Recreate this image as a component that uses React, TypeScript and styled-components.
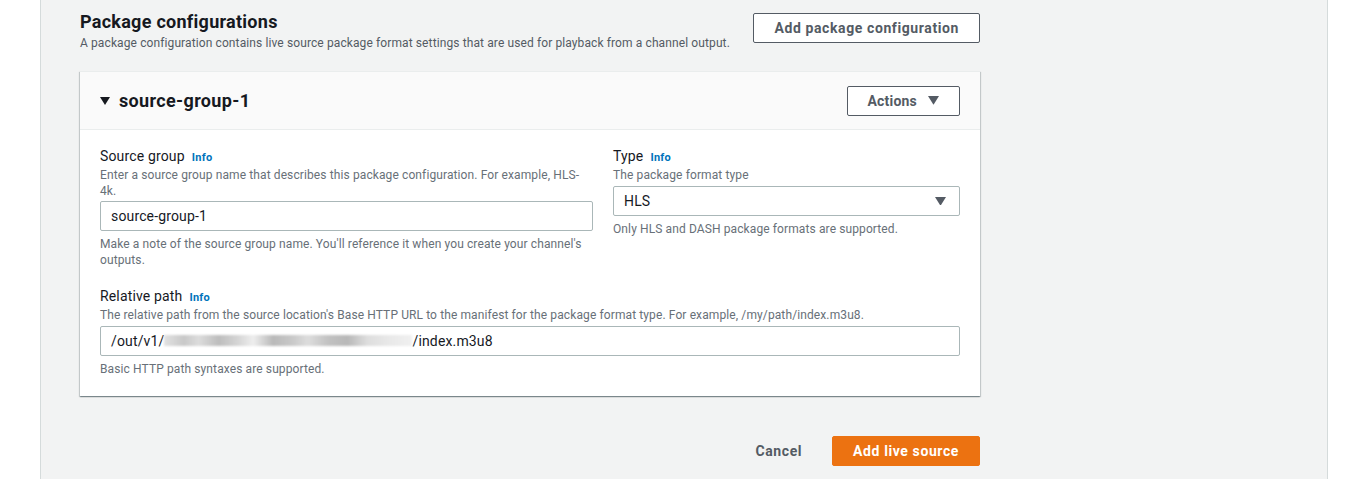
import React from "react";
import styled, { createGlobalStyle } from "styled-components";

const Global = createGlobalStyle`
  html, body { margin: 0; padding: 0; background: #ffffff; }
  body { font-family: Roboto, "Liberation Sans", Arial, sans-serif; color: #16191f; }
  * { box-sizing: border-box; }
`;

const Page = styled.div`
  display: flex;
  height: 479px;
  background: #ffffff;
`;

const Main = styled.main`
  margin-left: 40px;
  width: 1288px;
  background: #f2f3f3;
  border-left: 1px solid #d5dbdb;
  border-right: 1px solid #d5dbdb;
  padding: 10px 0 0 39px;
`;

const Content = styled.div`
  width: 900px;
  display: flex;
  flex-direction: column;
`;

const SectionHeader = styled.div`
  display: flex;
  justify-content: space-between;
  align-items: flex-start;
`;

const HeadingBlock = styled.div`
  display: flex;
  flex-direction: column;
`;

const Heading = styled.h2`
  margin: 0;
  font-size: 18px;
  line-height: 24px;
  font-weight: 700;
  letter-spacing: 0.27px;
  color: #16191f;
`;

const SectionDesc = styled.p`
  margin: 1px 0 0;
  font-size: 12px;
  line-height: 16px;
  letter-spacing: 0.11px;
  color: #545b64;
`;

const Button = styled.button<{ $primary?: boolean }>`
  height: 30px;
  padding: 0 20px;
  border-radius: 2px;
  font-family: inherit;
  font-size: 14px;
  font-weight: 700;
  letter-spacing: 0.6px;
  display: inline-flex;
  align-items: center;
  gap: 11px;
  cursor: pointer;
  background: ${(p) => (p.$primary ? "#ec7211" : "#ffffff")};
  color: ${(p) => (p.$primary ? "#ffffff" : "#545b64")};
  border: 1px solid ${(p) => (p.$primary ? "#ec7211" : "#545b64")};
`;

const TopButton = styled(Button)`
  margin-top: 3px;
`;

const ActionsButton = styled(Button)`
  letter-spacing: 0.2px;
`;

const LinkButton = styled.button`
  background: none;
  border: none;
  font-family: inherit;
  font-size: 14px;
  font-weight: 700;
  letter-spacing: 0.6px;
  color: #545b64;
  padding: 0 20px;
  height: 30px;
  cursor: pointer;
`;

const Panel = styled.section`
  margin-top: 20px;
  background: #ffffff;
  border-top: 1px solid #eaeded;
  box-shadow: 0 1px 1px 0 rgba(0, 28, 36, 0.3), 1px 1px 1px 0 rgba(0, 28, 36, 0.15),
    -1px 1px 1px 0 rgba(0, 28, 36, 0.15);
`;

const PanelHeader = styled.div`
  height: 58px;
  background: #fafafa;
  border-bottom: 1px solid #eaeded;
  display: flex;
  align-items: center;
  justify-content: space-between;
  padding: 0 20px;
`;

const PanelTitle = styled.h3`
  margin: 0;
  display: flex;
  align-items: center;
  gap: 9px;
  font-size: 18px;
  font-weight: 700;
  letter-spacing: 0.35px;
  color: #16191f;
`;

const PanelBody = styled.div`
  padding: 17px 20px 19px;
  display: flex;
  flex-direction: column;
  gap: 19px;
`;

const Row = styled.div`
  display: grid;
  grid-template-columns: 493px 347px;
  column-gap: 20px;
`;

const Field = styled.div`
  display: flex;
  flex-direction: column;
`;

const Label = styled.label`
  font-size: 14px;
  line-height: 18px;
  letter-spacing: 0.15px;
  color: #16191f;
  display: flex;
  align-items: baseline;
  gap: 7px;
`;

const Info = styled.a`
  font-size: 11px;
  font-weight: 700;
  letter-spacing: 0.3px;
  color: #0073bb;
  text-decoration: none;
`;

const Desc = styled.div`
  font-size: 12px;
  line-height: 16px;
  letter-spacing: 0.11px;
  color: #687078;
`;

const Constraint = styled(Desc)`
  margin-top: 5px;
`;

const InputBox = styled.div<{ $gap?: number }>`
  margin-top: ${(p) => p.$gap ?? 4}px;
  height: 30px;
  border: 1px solid #aab7b8;
  border-radius: 2px;
  background: #ffffff;
  display: flex;
  align-items: center;
  justify-content: space-between;
  padding: 0 13px 0 10px;
  font-size: 14px;
  letter-spacing: 0.15px;
  color: #16191f;
`;

const Redacted = styled.span`
  display: inline-block;
  width: 248px;
  height: 11px;
  margin-top: 2px;
  background: linear-gradient(
    90deg,
    #e2e2e2 0%, #c8c8c8 8%, #dcdcdc 14%, #bdbdbd 22%, #d6d6d6 30%,
    #eeeeee 36%, #b9b9b9 44%, #c9c9c9 52%, #dddddd 58%, #c2c2c2 66%,
    #b8b8b8 74%, #dedede 82%, #e8e8e8 90%, #f0f0f0 100%
  );
  filter: blur(1px);
`;

const Footer = styled.div`
  margin-top: 40px;
  display: flex;
  justify-content: flex-end;
  align-items: center;
  gap: 10px;
`;

const Caret = ({ size = 10, color = "#16191f" }: { size?: number; color?: string }) => (
  <svg width={size} height={size * 0.8} viewBox="0 0 10 8">
    <path d="M0 0 L10 0 L5 8 Z" fill={color} />
  </svg>
);

export default function App() {
  return (
    <>
      <Global />
      <Page>
        <Main>
          <Content>
            <SectionHeader>
              <HeadingBlock>
                <Heading>Package configurations</Heading>
                <SectionDesc>
                  A package configuration contains live source package format settings that are used for
                  playback from a channel output.
                </SectionDesc>
              </HeadingBlock>
              <TopButton>Add package configuration</TopButton>
            </SectionHeader>

            <Panel>
              <PanelHeader>
                <PanelTitle>
                  <Caret size={10} />
                  source-group-1
                </PanelTitle>
                <ActionsButton>
                  Actions
                  <Caret size={11} color="#545b64" />
                </ActionsButton>
              </PanelHeader>
              <PanelBody>
                <Row>
                  <Field>
                    <Label>
                      Source group <Info>Info</Info>
                    </Label>
                    <Desc>
                      Enter a source group name that describes this package configuration. For example, HLS-
                      <br />
                      4k.
                    </Desc>
                    <InputBox $gap={2}>source-group-1</InputBox>
                    <Constraint>
                      Make a note of the source group name. You'll reference it when you create your channel's
                      <br />
                      outputs.
                    </Constraint>
                  </Field>
                  <Field>
                    <Label>
                      Type <Info>Info</Info>
                    </Label>
                    <Desc>The package format type</Desc>
                    <InputBox $gap={3}>
                      HLS
                      <Caret size={11} color="#545b64" />
                    </InputBox>
                    <Constraint>Only HLS and DASH package formats are supported.</Constraint>
                  </Field>
                </Row>
                <Field>
                  <Label>
                    Relative path <Info>Info</Info>
                  </Label>
                  <Desc>
                    The relative path from the source location's Base HTTP URL to the manifest for the package
                    format type. For example, /my/path/index.m3u8.
                  </Desc>
                  <InputBox $gap={3}>
                    <span>
                      /out/v1/
                      <Redacted />
                      /index.m3u8
                    </span>
                  </InputBox>
                  <Constraint>Basic HTTP path syntaxes are supported.</Constraint>
                </Field>
              </PanelBody>
            </Panel>

            <Footer>
              <LinkButton>Cancel</LinkButton>
              <Button $primary>Add live source</Button>
            </Footer>
          </Content>
        </Main>
      </Page>
    </>
  );
}
